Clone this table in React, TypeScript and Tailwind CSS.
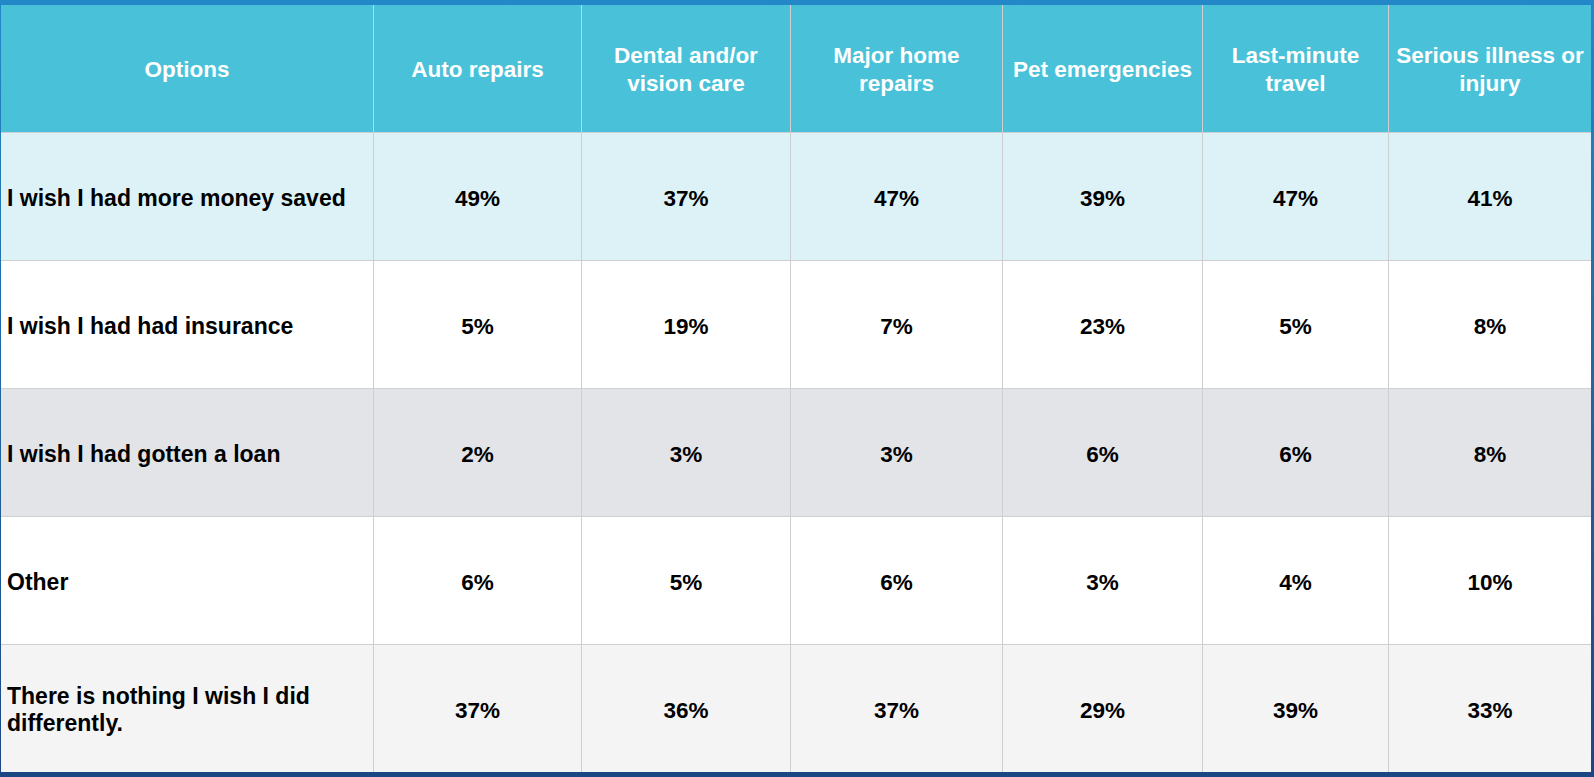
import React from "react";

const headers = [
  "Options",
  "Auto repairs",
  "Dental and/or vision care",
  "Major home repairs",
  "Pet emergencies",
  "Last-minute travel",
  "Serious illness or injury",
];

const rows: { label: string; values: string[]; bg: string }[] = [
  { label: "I wish I had more money saved", values: ["49%", "37%", "47%", "39%", "47%", "41%"], bg: "bg-[#ddf2f7]" },
  { label: "I wish I had had insurance", values: ["5%", "19%", "7%", "23%", "5%", "8%"], bg: "bg-white" },
  { label: "I wish I had gotten a loan", values: ["2%", "3%", "3%", "6%", "6%", "8%"], bg: "bg-[#e3e4e8]" },
  { label: "Other", values: ["6%", "5%", "6%", "3%", "4%", "10%"], bg: "bg-white" },
  { label: "There is nothing I wish I did differently.", values: ["37%", "36%", "37%", "29%", "39%", "33%"], bg: "bg-[#f4f4f4]" },
];

export default function App() {
  return (
    <div
      className="w-[1594px] h-[777px] bg-gradient-to-b from-[#2388c8] to-[#1b4684] pt-[5px] pl-[1px] pr-[3px] pb-[5px] overflow-hidden"
      style={{ fontFamily: '"Liberation Sans", Arial, sans-serif' }}
    >
      <div className="grid grid-cols-[372px_207px_208px_211px_199px_185px_202px] grid-rows-[127px_127px_127px_127px_127px_127px] gap-[1px] bg-[#cdcfd2] h-[767px]">
        {headers.map((h) => (
          <div
            key={h}
            className="bg-[#49c1d8] text-white font-bold text-[22.5px] leading-[28px] flex items-center justify-center text-center px-1 pt-[2px]"
          >
            {h}
          </div>
        ))}
        {rows.map((r) => (
          <React.Fragment key={r.label}>
            <div className={`${r.bg} text-black font-bold text-[23px] leading-[27px] flex items-center pl-[6px] pr-2 pt-[3px]`}>
              {r.label}
            </div>
            {r.values.map((v, i) => (
              <div
                key={i}
                className={`${r.bg} text-black font-bold text-[22.5px] leading-[27px] flex items-center justify-center pt-[3px]`}
              >
                {v}
              </div>
            ))}
          </React.Fragment>
        ))}
      </div>
    </div>
  );
}
